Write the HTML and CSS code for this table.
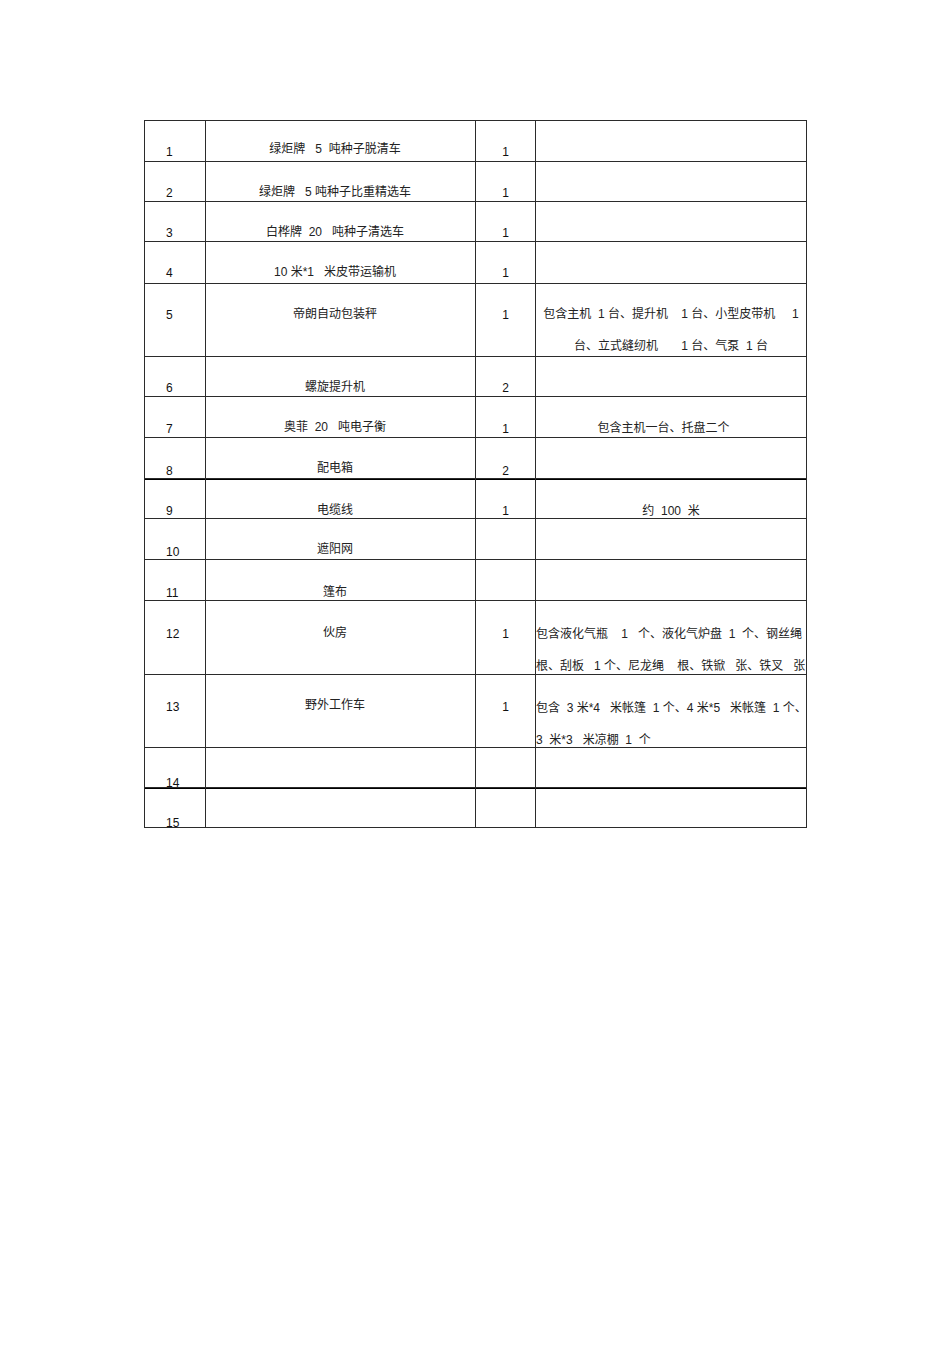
FILE: index.html
```html
<!DOCTYPE html>
<html lang="zh-CN">
<head>
<meta charset="utf-8">
<title>设备清单</title>
<link rel="stylesheet" href="styles.css">
</head>
<body>
<div class="page">
  <div class="sheet">
    <div class="cell no">1</div><div class="cell name up">绿炬牌   5  吨种子脱清车</div><div class="cell qty">1</div><div class="cell note"></div>
    <div class="cell no">2</div><div class="cell name">绿炬牌   5 吨种子比重精选车</div><div class="cell qty">1</div><div class="cell note"></div>
    <div class="cell no">3</div><div class="cell name">白桦牌  20   吨种子清选车</div><div class="cell qty">1</div><div class="cell note"></div>
    <div class="cell no">4</div><div class="cell name">10 米*1   米皮带运输机</div><div class="cell qty">1</div><div class="cell note"></div>
    <div class="cell no">5</div><div class="cell name">帝朗自动包装秤</div><div class="cell qty">1</div><div class="cell note">包含主机  1 台、提升机    1 台、小型皮带机     1<br>台、立式缝纫机       1 台、气泵  1 台</div>
    <div class="cell no">6</div><div class="cell name">螺旋提升机</div><div class="cell qty">2</div><div class="cell note"></div>
    <div class="cell no low1">7</div><div class="cell name">奥菲  20   吨电子衡</div><div class="cell qty low1">1</div><div class="cell note one shift">包含主机一台、托盘二个</div>
    <div class="cell no low2">8</div><div class="cell name">配电箱</div><div class="cell qty low2">2</div><div class="cell note"></div>
    <div class="cell no thick">9</div><div class="cell name thick">电缆线</div><div class="cell qty thick">1</div><div class="cell note one thick">约  100  米</div>
    <div class="cell no low2">10</div><div class="cell name">遮阳网</div><div class="cell qty"></div><div class="cell note"></div>
    <div class="cell no low2">11</div><div class="cell name low1">篷布</div><div class="cell qty"></div><div class="cell note"></div>
    <div class="cell no low2">12</div><div class="cell name low1">伙房</div><div class="cell qty low2">1</div><div class="cell note left">包含液化气瓶    1   个、液化气炉盘  1  个、钢丝绳<br>根、刮板   1 个、尼龙绳    根、铁锨   张、铁叉   张</div>
    <div class="cell no low1">13</div><div class="cell name">野外工作车</div><div class="cell qty low1">1</div><div class="cell note left">包含  3 米*4   米帐篷  1 个、4 米*5   米帐篷  1 个、<br>3  米*3   米凉棚  1  个</div>
    <div class="cell no low4">14</div><div class="cell name"></div><div class="cell qty"></div><div class="cell note"></div>
    <div class="cell no thick low3">15</div><div class="cell name thick"></div><div class="cell qty thick"></div><div class="cell note thick"></div>
  </div>
</div>
</body>
</html>
```

FILE: styles.css
```css
html, body {
  margin: 0;
  padding: 0;
  background: #ffffff;
}

body {
  font-family: "Liberation Sans", "Noto Sans CJK SC", sans-serif;
  font-size: 12px;
  color: #222222;
}

.page {
  padding: 120px 0 0 144px;
}

.sheet {
  display: grid;
  width: max-content;
  grid-template-columns: 60px 269px 59px 270px;
  grid-template-rows: 40px 39px 39px 41px 72px 39px 40px 40px 39px 40px 40px 73px 72px 39px 39px;
  gap: 1px;
  padding: 1px;
  background: #2b2b2b;
}

.cell {
  box-sizing: border-box;
  background: #ffffff;
  white-space: pre;
  line-height: 14px;
}

.no {
  padding-left: 21px;
  padding-top: 24px;
  color: #111111;
}

.name {
  text-align: center;
  padding-right: 11px;
  padding-top: 23px;
}

.name.up {
  padding-top: 21px;
}

.qty {
  text-align: center;
  padding-top: 24px;
  color: #111111;
}

.low1 {
  padding-top: 25px;
}

.low2 {
  padding-top: 26px;
}

.low3 {
  padding-top: 27px;
}

.low4 {
  padding-top: 28px;
}

.note {
  text-align: center;
  line-height: 32px;
  padding-top: 14px;
  overflow: hidden;
}

.note.one {
  line-height: 14px;
  padding-top: 24px;
}

.note.left {
  text-align: left;
  padding-top: 17px;
}

.note.shift {
  padding-right: 15px;
}

.thick {
  border-top: 1px solid #000000;
}
```
